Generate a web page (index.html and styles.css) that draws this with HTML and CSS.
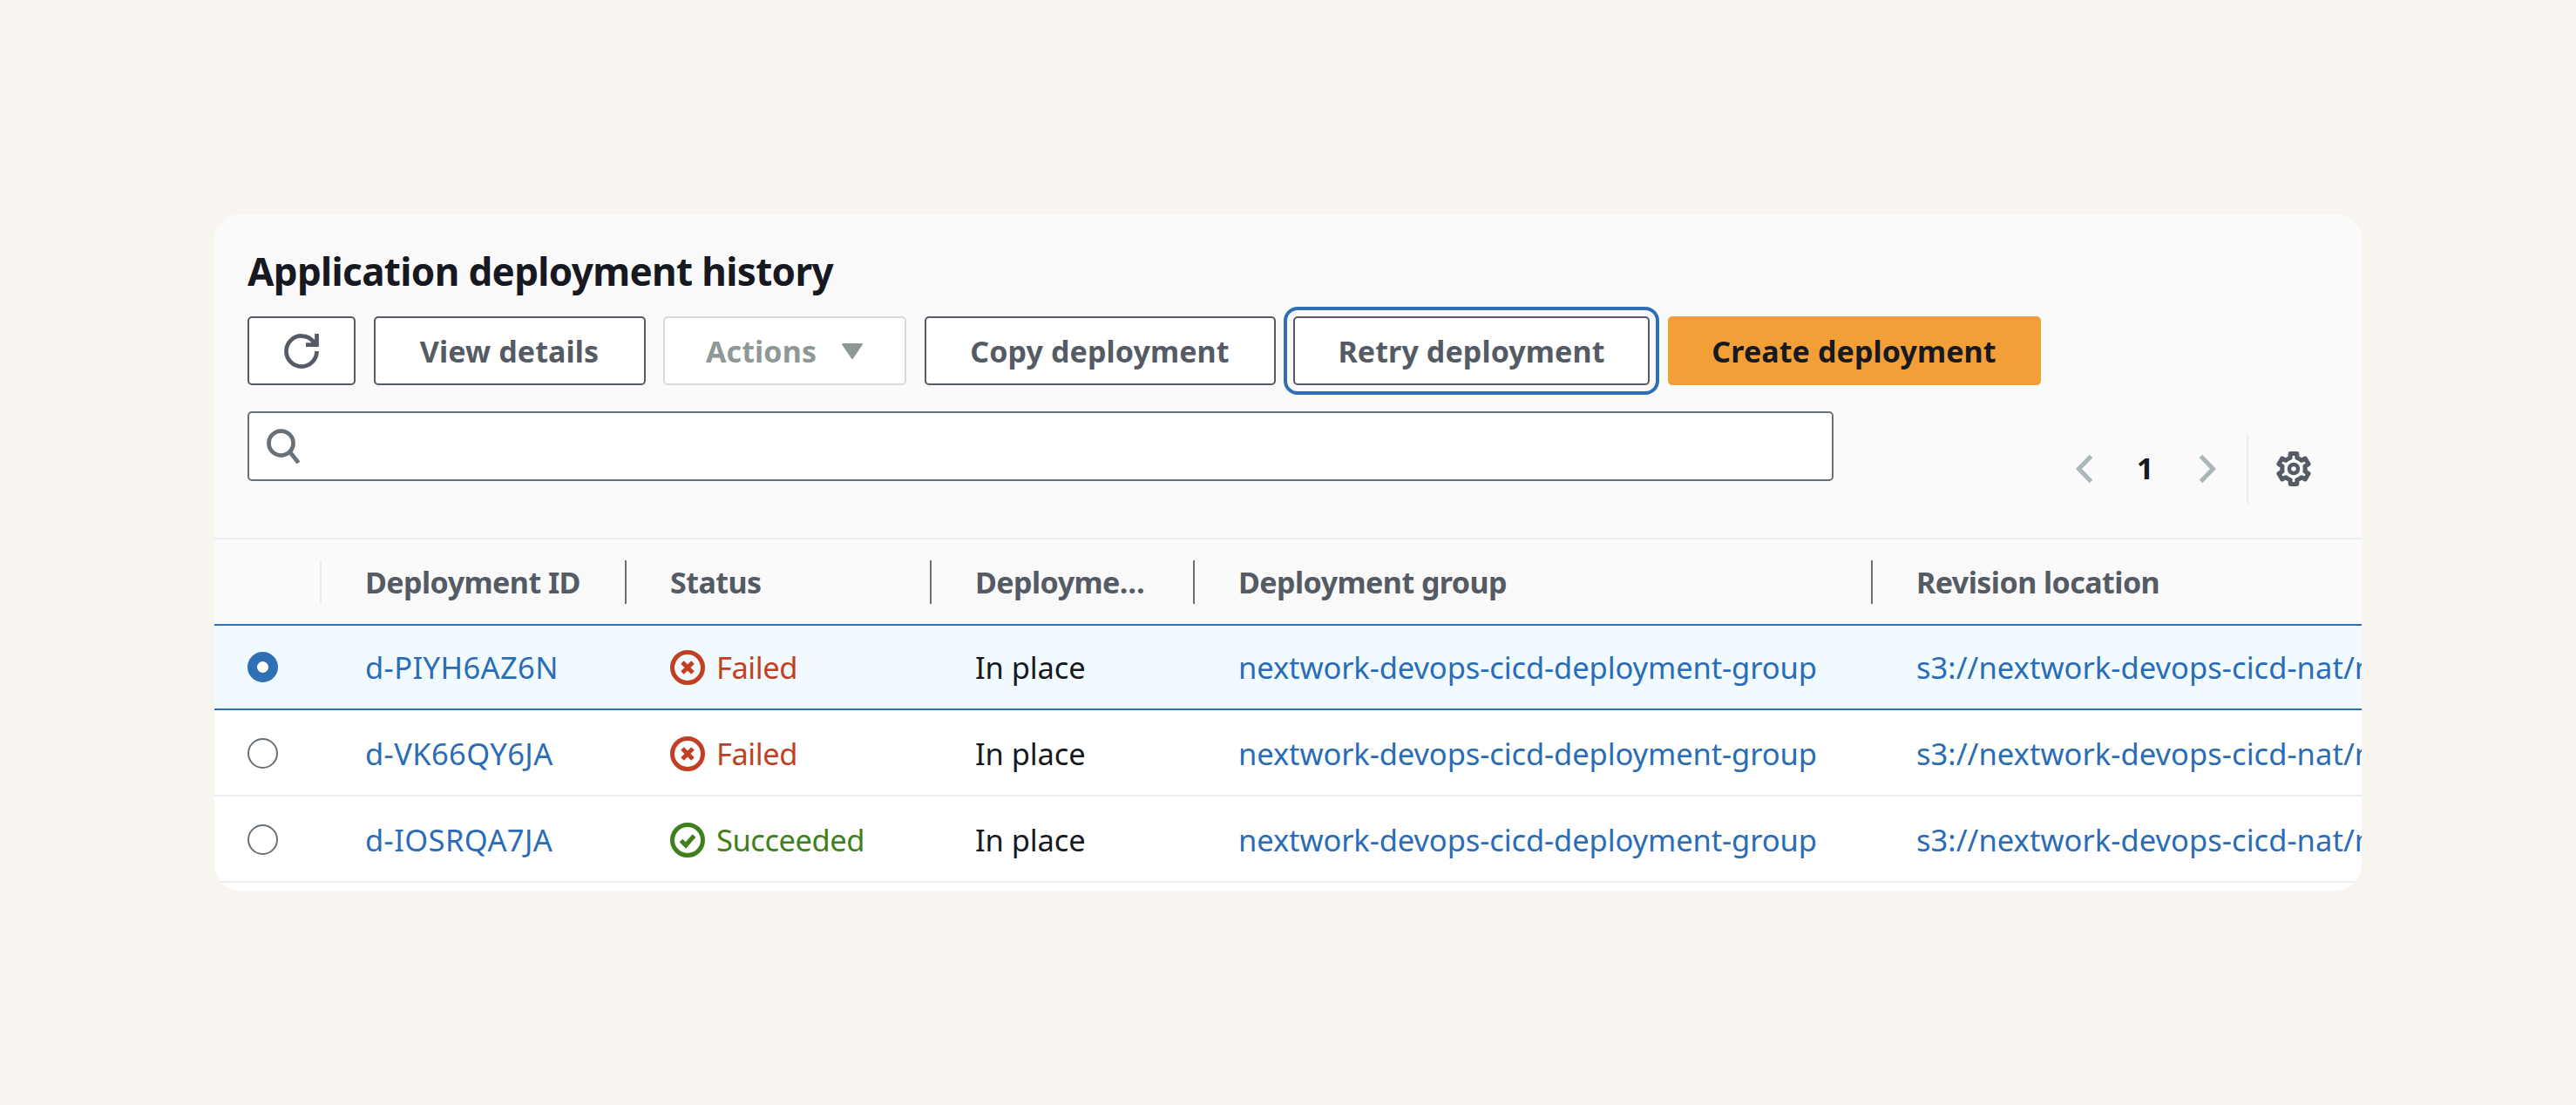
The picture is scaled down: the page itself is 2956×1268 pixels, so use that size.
FILE: index.html
```html
<!DOCTYPE html>
<html lang="en">
<head>
<meta charset="utf-8">
<title>Application deployment history</title>
<link rel="stylesheet" href="styles.css">
</head>
<body>
<section class="card">
  <header class="toolbar">
    <h2 class="title">Application deployment history</h2>
    <div class="actions">
      <button class="btn" aria-label="Refresh"><svg class="icon" viewBox="0 0 16 16"><path d="M10 5h5V0"/><path d="M15 8a6.99 6.99 0 0 1-7 7 6.99 6.99 0 0 1-7-7 6.99 6.99 0 0 1 7-7 7 7 0 0 1 6 3.42"/></svg></button>
      <button class="btn">View details</button>
      <button class="btn btn-disabled">Actions <svg class="caret" viewBox="0 0 26 20"><path d="M2 2h22L13 18z"/></svg></button>
      <button class="btn">Copy deployment</button>
      <button class="btn btn-focus">Retry deployment</button>
      <button class="btn btn-primary">Create deployment</button>
    </div>
    <div class="filter-row">
      <div class="search"><svg class="icon search-icon" viewBox="0 0 16 16"><circle cx="6.6" cy="6.6" r="5.6"/><path d="m10.6 10.6 4 5"/></svg></div>
      <div class="pager">
        <svg class="icon chevron" viewBox="0 0 16 16"><path d="M11.4 2.2 5.8 8l5.6 5.8"/></svg>
        <span class="page">1</span>
        <svg class="icon chevron" viewBox="0 0 16 16"><path d="M5.4 2.2 11 8l-5.6 5.8"/></svg>
        <div class="pager-sep"><svg class="icon gear" viewBox="0 0 16 16"><path d="M6.45 2.93 6.5 1h3l.05 1.93a5.3 5.3 0 0 1 2.07 1.19l1.69-.92 1.5 2.6-1.64 1.01a5.3 5.3 0 0 1 0 2.38l1.64 1.01-1.5 2.6-1.69-.92a5.3 5.3 0 0 1-2.07 1.19L9.5 15h-3l-.05-1.93a5.3 5.3 0 0 1-2.07-1.19l-1.69.92-1.5-2.6 1.64-1.01a5.3 5.3 0 0 1 0-2.38L1.19 5.8l1.5-2.6 1.69.92a5.3 5.3 0 0 1 2.07-1.19z"/><circle cx="8" cy="8" r="2"/></svg></div>
      </div>
    </div>
  </header>
  <div class="table">
    <div class="row row-head">
      <div class="th"></div>
      <div class="th"><span class="th-text">Deployment ID</span></div>
      <div class="th"><span class="th-text">Status</span></div>
      <div class="th th-clip"><span class="th-text">Deployment type</span></div>
      <div class="th"><span class="th-text">Deployment group</span></div>
      <div class="th th-last"><span class="th-text">Revision location</span></div>
    </div>
    <div class="row row-selected">
      <div class="td td-radio"><span class="radio radio-on"></span></div>
      <div class="td td-id"><a class="link">d-PIYH6AZ6N</a></div>
      <div class="td status status-error"><svg class="icon status-icon" viewBox="0 0 16 16"><circle cx="8" cy="8" r="7"/><path class="mark" d="m5.6 5.6 4.8 4.8m0-4.8-4.8 4.8"/></svg>Failed</div>
      <div class="td">In place</div>
      <div class="td"><a class="link">nextwork-devops-cicd-deployment-group</a></div>
      <div class="td td-last"><a class="link">s3://nextwork-devops-cicd-nat/nextwork-devops-cicd.zip</a></div>
    </div>
    <div class="row row-plain">
      <div class="td td-radio"><span class="radio"></span></div>
      <div class="td td-id"><a class="link">d-VK66QY6JA</a></div>
      <div class="td status status-error"><svg class="icon status-icon" viewBox="0 0 16 16"><circle cx="8" cy="8" r="7"/><path class="mark" d="m5.6 5.6 4.8 4.8m0-4.8-4.8 4.8"/></svg>Failed</div>
      <div class="td">In place</div>
      <div class="td"><a class="link">nextwork-devops-cicd-deployment-group</a></div>
      <div class="td td-last"><a class="link">s3://nextwork-devops-cicd-nat/nextwork-devops-cicd.zip</a></div>
    </div>
    <div class="row row-plain">
      <div class="td td-radio"><span class="radio"></span></div>
      <div class="td td-id"><a class="link">d-IOSRQA7JA</a></div>
      <div class="td status status-ok"><svg class="icon status-icon" viewBox="0 0 16 16"><circle cx="8" cy="8" r="7"/><path class="mark" d="m5 8.2 2.2 2.2L11 6"/></svg>Succeeded</div>
      <div class="td">In place</div>
      <div class="td"><a class="link">nextwork-devops-cicd-deployment-group</a></div>
      <div class="td td-last"><a class="link">s3://nextwork-devops-cicd-nat/nextwork-devops-cicd.zip</a></div>
    </div>
  </div>
</section>
</body>
</html>
```

FILE: styles.css
```css
* { box-sizing: border-box; }
html, body { margin: 0; height: 100%; }
body {
  background: #f8f5f0;
  padding: 246px 246px 0;
  font-family: "Noto Sans", sans-serif;
  font-size: 34.5px;
  letter-spacing: -0.1px;
  color: #16191f;
}
.card {
  width: 2464px;
  height: 776px;
  background: #fff;
  border-radius: 30px;
  overflow: hidden;
}
.toolbar {
  height: 371px;
  background: #fafafa;
  padding: 36px 58px 0 38px;
}
.title {
  margin: 0 0 22px;
  height: 59px;
  line-height: 59px;
  font-size: 44px;
  font-weight: 700;
  letter-spacing: -0.65px;
}
.actions {
  display: grid;
  grid-template-columns: 124px 312px 279px 403px 409px 428px;
  column-gap: 20.5px;
  height: 79px;
}
.btn {
  display: flex;
  align-items: center;
  justify-content: center;
  gap: 28px;
  background: #fff;
  border: 2.5px solid #545b64;
  border-radius: 5px;
  font: inherit;
  font-size: 34px;
  font-weight: 700;
  letter-spacing: 0.1px;
  color: #545b64;
  padding: 0;
}
.btn-disabled { border-color: #d5dbdb; color: #8e9896; }
.btn-focus { outline: 4.5px solid #2f6fb5; outline-offset: 7px; }
.btn-primary { background: #f39f37; border-color: #f39f37; color: #16191f; }
.icon {
  width: 40px;
  height: 40px;
  fill: none;
  stroke: currentColor;
  stroke-width: 1.9;
  flex: none;
}
.caret { width: 26px; height: 20px; fill: #8e9896; stroke: #8e9896; stroke-width: 2; stroke-linejoin: round; }
.filter-row {
  display: flex;
  margin-top: 30px;
}
.search {
  width: 1820px;
  height: 80px;
  display: flex;
  align-items: center;
  padding-left: 20px;
  background: #fff;
  border: 2.5px solid #687078;
  border-radius: 5px;
  color: #687078;
}
.pager {
  margin-left: auto;
  margin-top: 26px;
  height: 119px;
  display: flex;
  align-items: flex-start;
}
.chevron { margin-top: 20px; color: #aab7b8; stroke-width: 2; }
.page {
  width: 101px;
  margin-top: 15px;
  text-align: center;
  font-weight: 700;
}
.pager-sep {
  margin-left: 26px;
  height: 80px;
  padding: 20px 0 0 32px;
  border-left: 2px solid #eaeded;
  color: #545b64;
}
.gear { stroke-linejoin: round; stroke-width: 2; display: block; }
.gear circle { stroke-width: 1.8; }
.row {
  display: grid;
  grid-template-columns: 123px 350px 350px 302px 778px 561px;
  height: 99px;
  border-bottom: 2px solid #eaeded;
  background: #fff;
}
.row-plain { padding-top: 2px; }
.row-head {
  background: #fafafa;
  border-top: 2px solid #eaeded;
  border-bottom: 2px solid #2f6fb5;
  align-items: center;
  height: 101px;
  padding-top: 1px;
}
.row-selected {
  height: 97px;
  background: #f1fafe;
  border-bottom-color: #2f6fb5;
}
.th {
  height: 50px;
  display: flex;
  align-items: center;
  padding: 0 26px 0 50px;
  border-right: 2px solid #687078;
  font-size: 34px;
  font-weight: 700;
  letter-spacing: -0.55px;
  color: #545b64;
  min-width: 0;
}
.th:first-child { border-right-color: #eaeded; }
.th-clip { padding-right: 45px; }
.th-last { border-right: 0; }
.th-text { white-space: nowrap; overflow: hidden; text-overflow: ellipsis; }
.td {
  display: flex;
  align-items: center;
  padding-left: 50px;
  white-space: nowrap;
  overflow: hidden;
  min-width: 0;
}
.td-radio { padding-left: 38px; }
.td-id .link { letter-spacing: 0.4px; }
.td-last .link { letter-spacing: 0.05px; }
.link { color: #2a6cb5; }
.radio {
  width: 35px;
  height: 35px;
  border-radius: 50%;
  border: 2.5px solid #687078;
  background: #fff;
}
.radio-on { border: 11px solid #2f6fb5; }
.status { gap: 13px; letter-spacing: -0.45px; }
.status-error { color: #c23f24; }
.status-ok { color: #3f7f1c; }
.status-icon { width: 40px; height: 40px; stroke-width: 2; }
.mark { stroke-width: 2; }
```
